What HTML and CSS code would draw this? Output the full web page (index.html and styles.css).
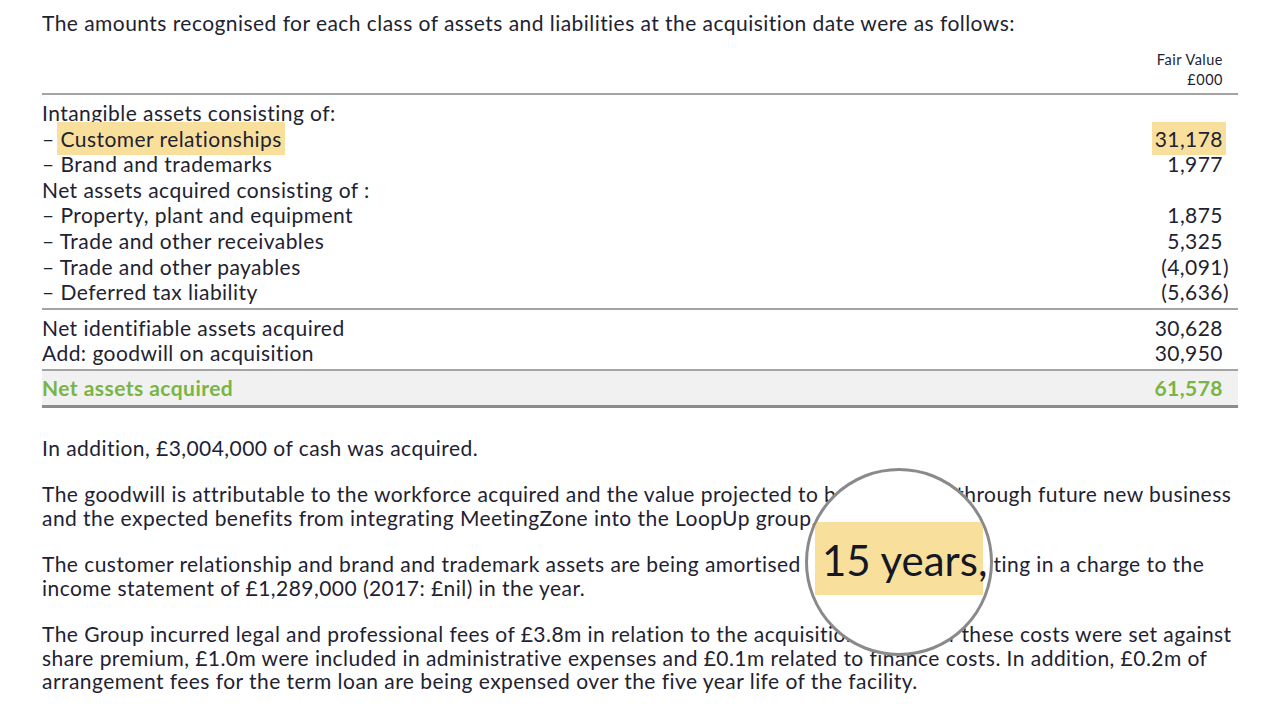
FILE: index.html
```html
<!DOCTYPE html>
<html lang="en">
<head>
<meta charset="utf-8">
<title>Acquisition note</title>
<link rel="stylesheet" href="styles.css">
</head>
<body>
<main class="page">
  <p class="intro">The amounts recognised for each class of assets and liabilities at the acquisition date were as follows:</p>

  <table class="fv">
    <thead>
      <tr>
        <th class="lab"></th>
        <th class="num head">Fair Value<br>£000</th>
      </tr>
    </thead>
    <tbody class="grp">
      <tr class="first"><td class="lab">Intangible assets consisting of:</td><td class="num"></td></tr>
      <tr><td class="lab">– <span class="hl">Customer relationships</span></td><td class="num"><span class="hl">31,178</span></td></tr>
      <tr><td class="lab">– Brand and trademarks</td><td class="num">1,977</td></tr>
      <tr><td class="lab">Net assets acquired consisting of :</td><td class="num"></td></tr>
      <tr><td class="lab">– Property, plant and equipment</td><td class="num">1,875</td></tr>
      <tr><td class="lab">– Trade and other receivables</td><td class="num">5,325</td></tr>
      <tr><td class="lab">– Trade and other payables</td><td class="num">(4,091<span class="hang">)</span></td></tr>
      <tr class="last"><td class="lab">– Deferred tax liability</td><td class="num">(5,636<span class="hang">)</span></td></tr>
    </tbody>
    <tbody class="grp">
      <tr class="first"><td class="lab">Net identifiable assets acquired</td><td class="num">30,628</td></tr>
      <tr class="last"><td class="lab">Add: goodwill on acquisition</td><td class="num">30,950</td></tr>
    </tbody>
    <tbody class="total">
      <tr><td class="lab">Net assets acquired</td><td class="num">61,578</td></tr>
    </tbody>
  </table>

  <div class="notes">
    <p>In addition, £3,004,000 of cash was acquired.</p>
    <p>The goodwill is attributable to the workforce acquired and the value projected to be generated through future new business<br>and the expected benefits from integrating MeetingZone into the LoopUp group.</p>
    <p>The customer relationship and brand and trademark assets are being amortised over 15 years, resulting in a charge to the<br>income statement of £1,289,000 (2017: £nil) in the year.</p>
    <p>The Group incurred legal and professional fees of £3.8m in relation to the acquisition. £2.7m of these costs were set against<br>share premium, £1.0m were included in administrative expenses and £0.1m related to finance costs. In addition, £0.2m of<br>arrangement fees for the term loan are being expensed over the five year life of the facility.</p>
  </div>

  <div class="lens">
    <span class="lens-hl">15 years,</span>
  </div>
</main>
</body>
</html>
```

FILE: styles.css
```css
html, body {
  margin: 0;
  padding: 0;
  background: #ffffff;
}

body {
  font-family: "Lato", "Open Sans", sans-serif;
  color: #1e2231;
  font-size: 21px;
  letter-spacing: 0.45px;
}

.page {
  position: relative;
  width: 1286px;
  height: 713px;
  overflow: hidden;
  box-sizing: border-box;
  padding: 10px 48px 0 42px;
}

p {
  margin: 0;
}

.intro {
  line-height: 26px;
}

.fv {
  width: 1196px;
  border-collapse: collapse;
  margin-top: 14px;
}

.fv td, .fv th {
  padding: 0;
}

.fv .lab {
  text-align: left;
}

.fv .num {
  text-align: right;
  padding-right: 15px;
  white-space: nowrap;
}

.fv .head {
  font-size: 14.5px;
  letter-spacing: 0.5px;
  font-weight: normal;
  line-height: 20px;
  padding-bottom: 3px;
  vertical-align: bottom;
}

.fv thead tr {
  border-bottom: 2px solid #a4a4a4;
}

.fv tbody.grp tr td {
  height: 25.6px;
  line-height: 25.6px;
}

.fv tbody.grp tr.first td {
  padding-top: 5px;
}

.fv tbody.grp tr.last td {
  padding-bottom: 3px;
}

.fv tbody.grp {
  border-bottom: 2px solid #a4a4a4;
}

.fv tbody.total td {
  background: #f1f1f1;
  color: #79b545;
  font-weight: bold;
  height: 33px;
  line-height: 34px;
  border-bottom: 3px solid #8c8c8c;
}

.hl {
  background: #f8e09c;
  padding: 4px 3px;
  margin: 0 -3px;
}

.hang {
  margin-right: -6px;
}

.notes {
  margin-top: 28px;
  line-height: 23.5px;
}

.notes p + p {
  margin-top: 23px;
}

.lens {
  position: absolute;
  left: 805px;
  top: 468px;
  width: 182px;
  height: 182px;
  border: 3px solid #8a8a8a;
  border-radius: 50%;
  background: #ffffff;
  overflow: hidden;
}

.lens-hl {
  position: absolute;
  left: 7px;
  top: 51px;
  width: 168px;
  height: 73px;
  box-sizing: border-box;
  padding: 3px 0 0 7px;
  background: #f8e09c;
  font-size: 42px;
  letter-spacing: 0;
  line-height: 71px;
  white-space: nowrap;
  color: #141824;
}
```
